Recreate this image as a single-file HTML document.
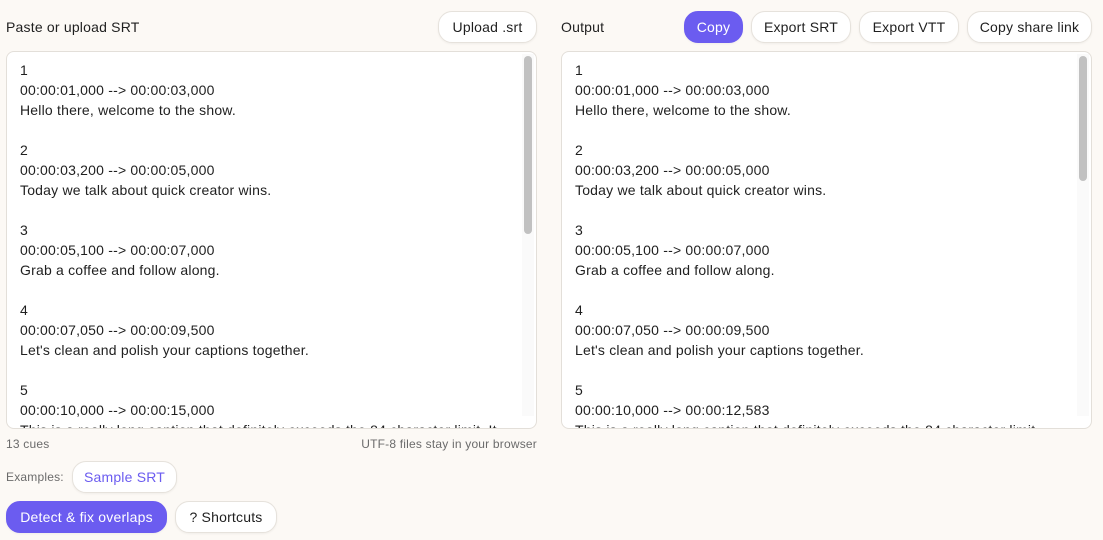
<!DOCTYPE html><html><head><style>
*{box-sizing:border-box;margin:0;padding:0}
body{width:1103px;height:540px;background:#fcf9f5;font-family:"Liberation Sans",sans-serif;color:#1f1f1f;position:relative;overflow:hidden;letter-spacing:.2px}
.a{position:absolute}
.btn{position:absolute;height:32px;border-radius:14px;background:#fff;border:1px solid #e6e2dc;font-size:14px;display:flex;align-items:center;justify-content:center;box-shadow:0 1px 2px rgba(0,0,0,.05)}
.pur{background:#6b5cf0;color:#fff;border-color:#6b5cf0}
.ta{position:absolute;top:51px;height:378px;width:531px;background:#fff;border:1px solid #e3dfd9;border-radius:8px;overflow:hidden}
.ta pre{font-family:"Liberation Sans",sans-serif;font-size:14px;line-height:20px;padding:8px 0 0 13px;white-space:pre;letter-spacing:.2px}
.sb{position:absolute;right:2px;top:2px;width:12px;height:362px;background:#fafafa}
.th{position:absolute;left:2px;width:8px;background:#c1c1c1;border-radius:4px}
.lbl{font-size:14px}
.sm{font-size:12px;color:#6b6b6b}
</style></head><body>
<div class="a lbl" style="left:6px;top:19px">Paste or upload SRT</div>
<div class="btn" style="left:438px;top:11px;width:99px">Upload .srt</div>
<div class="a lbl" style="left:561px;top:19px">Output</div>
<div class="btn pur" style="left:684px;top:11px;width:59px">Copy</div>
<div class="btn" style="left:751px;top:11px;width:100px">Export SRT</div>
<div class="btn" style="left:859px;top:11px;width:100px">Export VTT</div>
<div class="btn" style="left:967px;top:11px;width:125px">Copy share link</div>

<div class="ta" style="left:6px"><pre>1
00:00:01,000 --&gt; 00:00:03,000
Hello there, welcome to the show.

2
00:00:03,200 --&gt; 00:00:05,000
Today we talk about quick creator wins.

3
00:00:05,100 --&gt; 00:00:07,000
Grab a coffee and follow along.

4
00:00:07,050 --&gt; 00:00:09,500
Let's clean and polish your captions together.

5
00:00:10,000 --&gt; 00:00:15,000
This is a really long caption that definitely exceeds the 84 character limit. It</pre>
<div class="sb"><div class="th" style="top:2px;height:178px"></div></div></div>

<div class="ta" style="left:561px"><pre>1
00:00:01,000 --&gt; 00:00:03,000
Hello there, welcome to the show.

2
00:00:03,200 --&gt; 00:00:05,000
Today we talk about quick creator wins.

3
00:00:05,100 --&gt; 00:00:07,000
Grab a coffee and follow along.

4
00:00:07,050 --&gt; 00:00:09,500
Let's clean and polish your captions together.

5
00:00:10,000 --&gt; 00:00:12,583
This is a really long caption that definitely exceeds the 84 character limit.</pre>
<div class="sb"><div class="th" style="top:2px;height:125px"></div></div></div>

<div class="a sm" style="left:6px;top:437px">13 cues</div>
<div class="a sm" style="right:566px;top:437px">UTF-8 files stay in your browser</div>
<div class="a sm" style="left:6px;top:470px">Examples:</div>
<div class="btn" style="left:72px;top:461px;width:105px;color:#6b5cf0">Sample SRT</div>
<div class="btn pur" style="left:6px;top:501px;width:161px">Detect &amp; fix overlaps</div>
<div class="btn" style="left:175px;top:501px;width:102px">? Shortcuts</div>
</body></html>
